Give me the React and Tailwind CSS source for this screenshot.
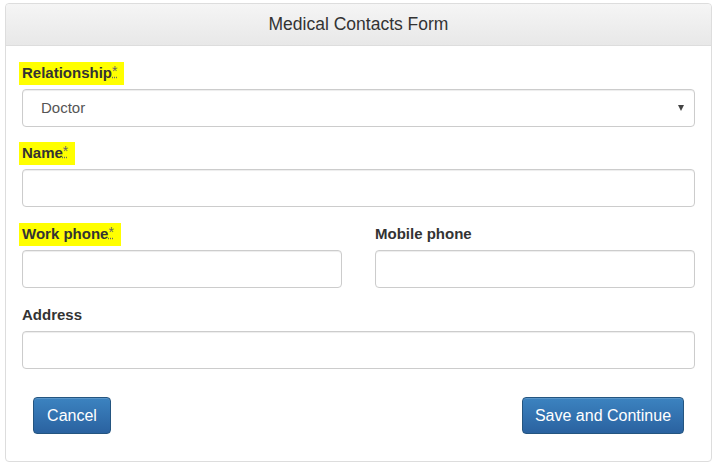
import React from "react";

const font = { fontFamily: '"Liberation Sans", Arial, sans-serif' };

const Label = ({ children, required = false }) => (
  <div className="flex h-[23px] mb-[4px]">
    {required ? (
      <span className="inline-flex items-center h-[23px] -ml-[3px] pl-[3px] pr-[7px] bg-[#ffff00] text-[15px] font-bold text-[#333]">
        {children}
        <abbr className="font-normal text-[14px] text-[#666] self-start mt-[1px] leading-[16px] underline decoration-dotted decoration-[#666] underline-offset-[1px] no-underline-skip">
          *
        </abbr>
      </span>
    ) : (
      <span className="inline-flex items-center h-[23px] text-[15px] font-bold text-[#333]">
        {children}
      </span>
    )}
  </div>
);

const TextInput = () => (
  <input
    type="text"
    className="block w-full h-[38px] rounded-[4px] border border-[#ccc] bg-white shadow-[inset_0_1px_1px_rgba(0,0,0,0.075)] outline-none"
  />
);

export default function App() {
  return (
    <div className="w-[715px] h-[464px] bg-white pl-[5px] pr-[3px] pt-[3px]" style={font}>
      <div className="border border-[#ddd] rounded-[4px] h-[459px] flex flex-col">
        {/* panel heading */}
        <div className="h-[42px] flex items-center justify-center border-b border-[#ddd] rounded-t-[4px] bg-gradient-to-b from-[#f5f5f5] to-[#e8e8e8]">
          <h3 className="text-[17.5px] text-[#333] leading-none">Medical Contacts Form</h3>
        </div>

        <div className="px-[16px] pt-[16px]">
          <div className="mb-[15px]">
            <Label required>Relationship</Label>
            <div className="relative h-[38px] rounded-[4px] border border-[#ccc] bg-white shadow-[inset_0_1px_1px_rgba(0,0,0,0.075)] flex items-center">
              <span className="pl-[18px] text-[15px] text-[#555]">Doctor</span>
              <span className="absolute right-[10px] top-[15px] w-0 h-0 border-l-[3.5px] border-r-[3.5px] border-t-[6px] border-l-transparent border-r-transparent border-t-[#444]" />
            </div>
          </div>

          <div className="mb-[16px]">
            <Label required>Name</Label>
            <TextInput />
          </div>

          <div className="grid grid-cols-2 gap-x-[33px] mb-[16px]">
            <div>
              <Label required>Work phone</Label>
              <TextInput />
            </div>
            <div>
              <Label>Mobile phone</Label>
              <TextInput />
            </div>
          </div>

          <div>
            <Label>Address</Label>
            <TextInput />
          </div>

          <div className="flex justify-between px-[11px] mt-[28px]">
            <button className="h-[37px] w-[78px] rounded-[4px] border border-[#245580] bg-gradient-to-b from-[#3c83c0] to-[#2a62a0] text-white text-[16px] shadow-[inset_0_1px_0_rgba(255,255,255,0.15)]">
              Cancel
            </button>
            <button className="h-[37px] w-[162px] rounded-[4px] border border-[#245580] bg-gradient-to-b from-[#3c83c0] to-[#2a62a0] text-white text-[16px] shadow-[inset_0_1px_0_rgba(255,255,255,0.15)]">
              Save and Continue
            </button>
          </div>
        </div>
      </div>
    </div>
  );
}
